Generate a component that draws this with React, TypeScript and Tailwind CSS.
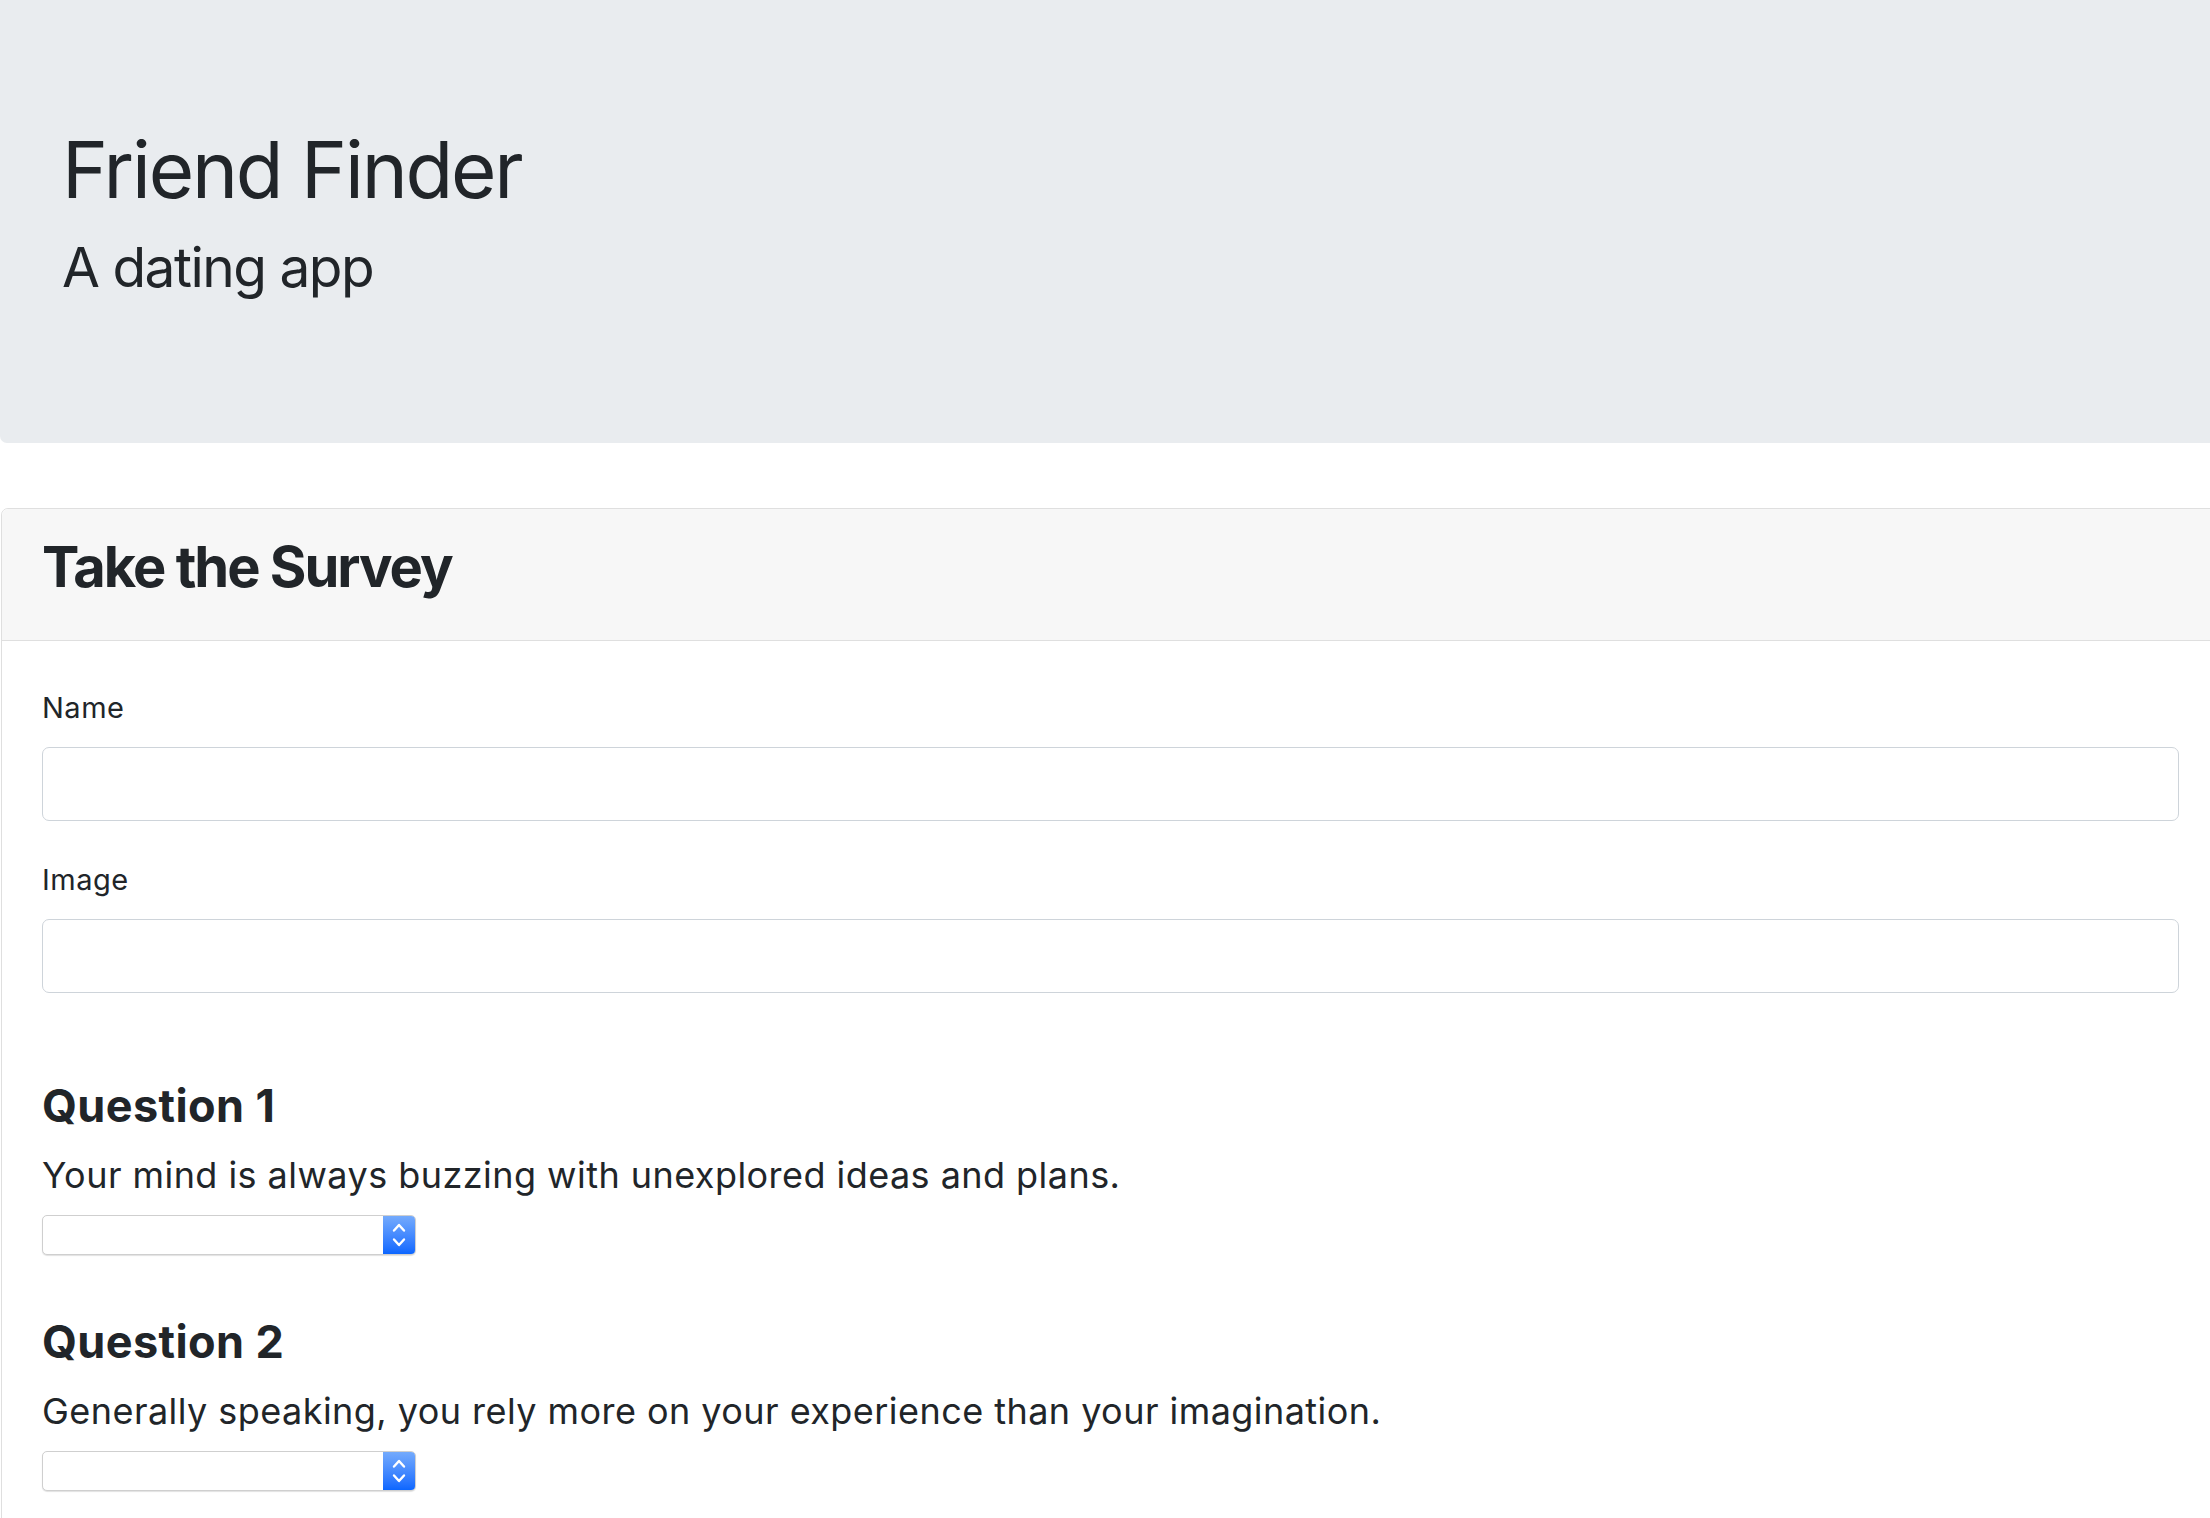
const questions = [
  {
    title: "Question 1",
    text: "Your mind is always buzzing with unexplored ideas and plans.",
  },
  {
    title: "Question 2",
    text: "Generally speaking, you rely more on your experience than your imagination.",
  },
];

const fields = ["Name", "Image"];

const SelectBox = () => {
  return (
    <div className="mt-[13px] flex h-[40px] w-[374px] overflow-hidden rounded-[5px] border border-[#cfcfcf] bg-white shadow-[0_1px_1px_rgba(0,0,0,0.12)]">
      <div className="flex-1" />
      <div className="flex w-[32px] items-center justify-center bg-linear-to-b from-[#74aafc] to-[#0a66ff]">
        <svg width="14" height="28" viewBox="0 0 14 28" fill="none">
          <path
            d="M2 9.5 L7 4 L12 9.5"
            stroke="white"
            strokeWidth="2.4"
            strokeLinecap="round"
            strokeLinejoin="round"
          />
          <path
            d="M2 18.5 L7 24 L12 18.5"
            stroke="white"
            strokeWidth="2.4"
            strokeLinecap="round"
            strokeLinejoin="round"
          />
        </svg>
      </div>
    </div>
  );
};

const App = () => {
  return (
    <div
      className="h-screen w-full overflow-hidden bg-white text-[#212529]"
      style={{ fontFamily: "Inter, 'Noto Sans', sans-serif" }}
    >
      <div className="w-[2220px]">
        {/* Jumbotron */}
        <div className="h-[443px] rounded-bl-[7px] bg-[#e9ecef] pl-[62px] pt-[123px]">
          <h1 className="text-[78px] font-normal leading-[1.2] tracking-[-2.2px]">
            Friend Finder
          </h1>
          <p className="mt-[9px] text-[55px] leading-[1.5] tracking-[-1.5px]">
            A dating app
          </p>
        </div>

        {/* Survey card */}
        <div className="ml-[1px] mt-[65px] rounded-[7px] border border-[#dfdfdf]">
          <div className="h-[132px] rounded-t-[7px] border-b border-[#dfdfdf] bg-[#f7f7f7] px-[40px] pt-[25px]">
            <h2 className="text-[56px] font-bold leading-[1.2] tracking-[-2px]">
              Take the Survey
            </h2>
          </div>

          <div className="px-[40px] pb-[200px] pt-[47px]">
            {fields.map((label) => (
              <div key={label} className="mb-[39px]">
                <label className="block text-[29px] leading-[39px] tracking-[0.5px]">
                  {label}
                </label>
                <input
                  type="text"
                  className="mt-[20px] block h-[74px] w-full rounded-[7px] border border-[#ced4da] bg-white"
                />
              </div>
            ))}

            <div className="pt-[47px]">
              {questions.map((q, i) => (
                <div key={q.title} className={i > 0 ? "mt-[60px]" : ""}>
                  <h3 className="text-[45px] font-bold leading-[1.2] tracking-[0.4px]">
                    {q.title}
                  </h3>
                  <p className="mt-[15px] text-[36px] leading-[1.5] tracking-[0.45px]">
                    {q.text}
                  </p>
                  <SelectBox />
                </div>
              ))}
            </div>
          </div>
        </div>
      </div>
    </div>
  );
};

export default App;
